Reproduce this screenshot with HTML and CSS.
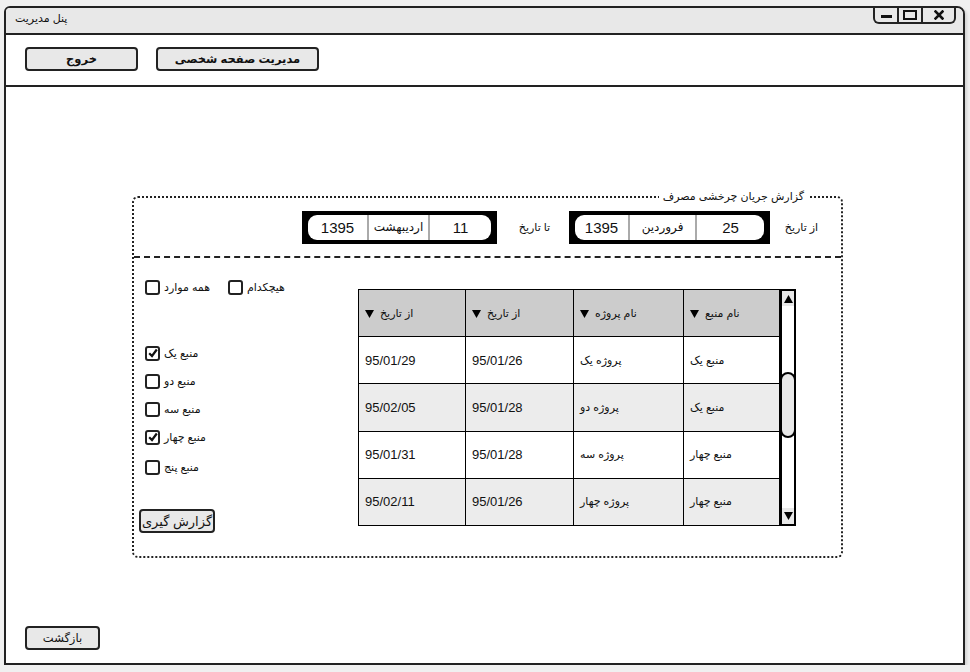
FILE: index.html
```html
<!DOCTYPE html>
<html lang="fa">
<head>
<meta charset="utf-8">
<title>پنل مدیریت</title>
<link rel="stylesheet" href="styles.css">
</head>
<body>
<div class="window">
  <div class="titlebar">
    <div class="title">پنل مدیریت</div>
    <div class="controls">
      <div class="ctl ctl-min"><svg width="11" height="4" viewBox="0 0 11 4"><rect x="0" y="0" width="11" height="3" fill="#111"/></svg></div>
      <div class="ctl ctl-max"><svg width="14" height="10" viewBox="0 0 14 10"><rect x="1" y="1" width="12" height="8" fill="none" stroke="#111" stroke-width="2"/></svg></div>
      <div class="ctl ctl-close"><svg width="10" height="10" viewBox="0 0 10 10"><path d="M1.5 1.5 L8.5 8.5 M8.5 1.5 L1.5 8.5" stroke="#111" stroke-width="2.6" stroke-linecap="square"/></svg></div>
    </div>
  </div>
  <div class="toolbar">
    <div class="btn btn-exit">خروج</div>
    <div class="btn btn-profile">مدیریت صفحه شخصی</div>
  </div>
  <div class="content">
    <div class="panel">
      <span class="legend">گزارش جریان چرخشی مصرف</span>
      <div class="panel-head">
        <span class="lbl">از تاریخ</span>
        <div class="picker picker-a">
          <div class="pill">
            <span class="seg num d">25</span>
            <span class="seg m">فروردین</span>
            <span class="seg num y">1395</span>
          </div>
        </div>
        <span class="lbl lbl-to">تا تاریخ</span>
        <div class="picker picker-b">
          <div class="pill">
            <span class="seg num d">11</span>
            <span class="seg m">اردیبهشت</span>
            <span class="seg num y">1395</span>
          </div>
        </div>
      </div>
      <div class="panel-body">
        <div class="grid-wrap">
          <table class="grid">
            <colgroup><col class="c1"><col class="c2"><col class="c3"><col class="c4"></colgroup>
            <thead>
              <tr>
                <th>نام منبع<svg class="arr" width="9" height="8" viewBox="0 0 9 8"><polygon points="0,0 9,0 4.5,8" fill="#000"/></svg></th>
                <th>نام پروژه<svg class="arr" width="9" height="8" viewBox="0 0 9 8"><polygon points="0,0 9,0 4.5,8" fill="#000"/></svg></th>
                <th>از تاریخ<svg class="arr" width="9" height="8" viewBox="0 0 9 8"><polygon points="0,0 9,0 4.5,8" fill="#000"/></svg></th>
                <th>از تاریخ<svg class="arr" width="9" height="8" viewBox="0 0 9 8"><polygon points="0,0 9,0 4.5,8" fill="#000"/></svg></th>
              </tr>
            </thead>
            <tbody>
              <tr><td>منبع یک</td><td>پروژه یک</td><td class="num">95/01/26</td><td class="num">95/01/29</td></tr>
              <tr class="alt"><td>منبع یک</td><td>پروژه دو</td><td class="num">95/01/28</td><td class="num">95/02/05</td></tr>
              <tr><td>منبع چهار</td><td>پروژه سه</td><td class="num">95/01/28</td><td class="num">95/01/31</td></tr>
              <tr class="alt"><td>منبع چهار</td><td>پروژه چهار</td><td class="num">95/01/26</td><td class="num">95/02/11</td></tr>
            </tbody>
          </table>
          <div class="sb">
            <div class="sb-up"><svg width="9" height="8" viewBox="0 0 9 8"><polygon points="0,8 9,8 4.5,0" fill="#000"/></svg></div>
            <div class="sb-thumb"></div>
            <div class="sb-down"><svg width="9" height="8" viewBox="0 0 9 8"><polygon points="0,0 9,0 4.5,8" fill="#000"/></svg></div>
          </div>
        </div>
        <div class="checks">
          <div class="allrow">
            <span class="cb"></span><span class="cbl cbl-all">همه موارد</span>
            <span class="cb"></span><span class="cbl">هیچکدام</span>
          </div>
          <div class="item first"><span class="cb"><svg width="10" height="10" viewBox="0 0 10 10"><path d="M1.2 5.2 L4 8 L8.8 1.5" fill="none" stroke="#111" stroke-width="2.2"/></svg></span><span class="cbl">منبع یک</span></div>
          <div class="item"><span class="cb"></span><span class="cbl">منبع دو</span></div>
          <div class="item"><span class="cb"></span><span class="cbl">منبع سه</span></div>
          <div class="item"><span class="cb"><svg width="10" height="10" viewBox="0 0 10 10"><path d="M1.2 5.2 L4 8 L8.8 1.5" fill="none" stroke="#111" stroke-width="2.2"/></svg></span><span class="cbl">منبع چهار</span></div>
          <div class="item last"><span class="cb"></span><span class="cbl">منبع پنج</span></div>
          <div class="report-btn">گزارش گیری</div>
        </div>
      </div>
    </div>
    <div class="btn back">بازگشت</div>
  </div>
</div>
</body>
</html>
```

FILE: styles.css
```css
* { box-sizing: border-box; }

body {
  margin: 0;
  background: #f0f0f0;
  font-family: "Liberation Sans", "DejaVu Sans", sans-serif;
  color: #111;
}

.window {
  margin: 6px 0 0 4px;
  width: 961px;
  height: 659px;
  border: 2px solid #222;
  border-radius: 6px 8px 0 0;
  background: #fff;
  display: flex;
  flex-direction: column;
  box-shadow: 2px 2px 3px rgba(0, 0, 0, 0.12);
}

.titlebar {
  flex: none;
  height: 27px;
  background: #e8e8e8;
  border-bottom: 2px solid #222;
  border-radius: 4px 6px 0 0;
  display: flex;
  justify-content: space-between;
  align-items: flex-start;
}

.title {
  font-size: 11px;
  line-height: 20px;
  padding-left: 9px;
}

.controls {
  display: flex;
  height: 16px;
  margin-right: 7px;
  border: 2px solid #222;
  border-top: 0;
  border-radius: 0 0 6px 6px;
}

.ctl {
  display: flex;
  align-items: center;
  justify-content: center;
  height: 100%;
}
.ctl + .ctl { border-left: 2px solid #222; }
.ctl-min { width: 22px; padding-top: 4px; }
.ctl-max { width: 24px; }
.ctl-close { width: 33px; }

.toolbar {
  flex: none;
  height: 52px;
  border-bottom: 2px solid #222;
  display: flex;
  align-items: flex-start;
  gap: 18px;
  padding: 12px 0 0 19px;
}

.btn {
  height: 24px;
  border: 2px solid #222;
  border-radius: 4px;
  background: #e8e8e8;
  font-size: 11.5px;
  font-weight: bold;
  display: flex;
  align-items: center;
  justify-content: center;
}
.btn-exit { width: 113px; }
.btn-profile { width: 163px; }

.content {
  flex: 1;
  display: flex;
  flex-direction: column;
  align-items: flex-start;
}

.panel {
  position: relative;
  direction: rtl;
  margin: 109px 0 0 126px;
  width: 711px;
  height: 362px;
  border: 2px dotted #222;
  border-radius: 6px;
}

.legend {
  position: absolute;
  top: -9px;
  right: 33px;
  padding: 0 4px;
  background: #fff;
  font-size: 11px;
  line-height: 14px;
}

.panel-head {
  height: 60px;
  border-bottom: 2px dashed #222;
  display: flex;
  align-items: center;
  padding-right: 21px;
}

.lbl {
  width: 37px;
  font-size: 11px;
  text-align: center;
  white-space: nowrap;
}

.picker {
  display: flex;
  background: #000;
  padding: 4px 6px;
  margin-right: 13px;
}
.lbl-to { margin-right: 16px; }
.picker-b { margin-right: 19px; }

.pill {
  display: flex;
  height: 25px;
  background: #fff;
  border-radius: 9px;
}

.seg {
  display: flex;
  align-items: center;
  justify-content: center;
  font-size: 12px;
  white-space: nowrap;
}
.seg + .seg { border-right: 2px solid #aaa; }
.seg.num { font-size: 15px; }

.picker-a .d { width: 67px; }
.picker-a .m { width: 67px; }
.picker-a .y { width: 55px; }
.picker-b .d { width: 61px; }
.picker-b .m { width: 61px; }
.picker-b .y { width: 61px; }

.panel-body {
  height: 296px;
  display: flex;
  align-items: flex-start;
}

.grid-wrap {
  direction: ltr;
  display: flex;
  margin: 31px 45px 0 0;
}

.grid {
  direction: rtl;
  border-collapse: collapse;
  table-layout: fixed;
  width: 421px;
  font-size: 11px;
}
.c1 { width: 96px; }
.c2 { width: 110px; }
.c3 { width: 108px; }
.c4 { width: 107px; }

.grid tr { height: 47px; }

.grid th,
.grid td {
  border: 1px solid #000;
  padding: 0 0 0 6px;
  text-align: left;
  font-weight: normal;
  white-space: nowrap;
}
.grid th { background: #cccccc; }
.grid tr.alt td { background: #ececec; }
.grid td.num { font-size: 13px; }

.arr { margin-right: 6px; vertical-align: -1px; }

.sb {
  width: 16px;
  height: 237px;
  border: 2px solid #000;
  display: flex;
  flex-direction: column;
}
.sb-up,
.sb-down {
  flex: none;
  height: 16px;
  background: #e8e8e8;
  display: flex;
  align-items: center;
  justify-content: center;
}
.sb-up { height: 15px; }
.sb-thumb {
  flex: none;
  height: 66px;
  margin: 66px -2px 0;
  border: 2px solid #000;
  border-radius: 8px;
  background: #e8e8e8;
}
.sb-down { margin-top: auto; }

.checks {
  direction: ltr;
  margin-right: auto;
  padding-left: 5px;
  display: flex;
  flex-direction: column;
  align-items: flex-start;
}

.allrow {
  display: flex;
  align-items: center;
  height: 15px;
  margin: 22px 0 0 6px;
}

.cb {
  flex: none;
  width: 15px;
  height: 15px;
  border: 2px solid #222;
  border-radius: 3px;
  display: flex;
  align-items: center;
  justify-content: center;
}

.cbl {
  font-size: 11px;
  margin-left: 4px;
  white-space: nowrap;
}
.cbl-all { margin-right: 18px; }

.item {
  height: 28px;
  display: flex;
  align-items: center;
  margin-left: 6px;
}
.item.first { margin-top: 44px; }
.item.last { margin-top: 2px; }

.report-btn {
  margin-top: 28px;
  width: 76px;
  height: 24px;
  border: 2px solid #222;
  border-radius: 4px;
  background: #e8e8e8;
  font-size: 13px;
  display: flex;
  align-items: center;
  justify-content: center;
  white-space: nowrap;
}

.back {
  width: 75px;
  margin: auto 0 13px 19px;
  font-weight: normal;
}
```
